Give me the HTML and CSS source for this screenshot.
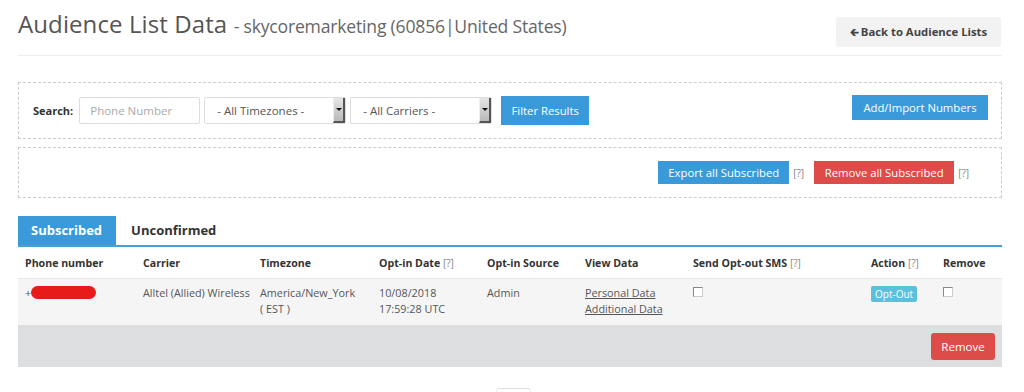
FILE: index.html
```html
<!DOCTYPE html>
<html lang="en">
<head>
    <meta charset="UTF-8">
    <meta name="viewport" content="width=device-width, initial-scale=1.0">
    <title>Audience List Data</title>
    <link rel="stylesheet" href="styles.css">
</head>
<body>
    <div class="page">
        <div class="page-header">
            <h1>Audience List Data <small>- skycoremarketing (60856|United States)</small></h1>
            <a class="btn-back" href="#"><span class="arrow">&#129136;</span>Back to Audience Lists</a>
        </div>

        <div class="box filter-box">
            <div class="filter-left">
                <label for="phone">Search:</label>
                <input type="text" id="phone" class="field" placeholder="Phone Number">
                <div class="fake-select"><span>- All Timezones -</span><i></i></div>
                <div class="fake-select"><span>- All Carriers -</span><i></i></div>
                <button class="btn btn-blue btn-filter">Filter Results</button>
            </div>
            <button class="btn btn-blue btn-add">Add/Import Numbers</button>
        </div>

        <div class="box action-box">
            <button class="btn btn-blue">Export all Subscribed</button>
            <span class="help">[?]</span>
            <button class="btn btn-red">Remove all Subscribed</button>
            <span class="help">[?]</span>
        </div>

        <div class="tabs">
            <a class="tab active" href="#">Subscribed</a>
            <a class="tab" href="#">Unconfirmed</a>
        </div>

        <table class="list">
            <thead>
                <tr>
                    <th class="c1">Phone number</th>
                    <th class="c2">Carrier</th>
                    <th class="c3">Timezone</th>
                    <th class="c4">Opt-in Date <span class="help">[?]</span></th>
                    <th class="c5">Opt-in Source</th>
                    <th class="c6">View Data</th>
                    <th class="c7">Send Opt-out SMS <span class="help">[?]</span></th>
                    <th class="c8">Action <span class="help">[?]</span></th>
                    <th class="c9">Remove</th>
                </tr>
            </thead>
            <tbody>
                <tr>
                    <td>+<span class="redacted"></span></td>
                    <td>Alltel (Allied) Wireless</td>
                    <td>America/New_York<br>( EST )</td>
                    <td>10/08/2018<br>17:59:28 UTC</td>
                    <td>Admin</td>
                    <td><a href="#">Personal Data</a><br><a href="#">Additional Data</a></td>
                    <td><span class="check"></span></td>
                    <td><span class="badge">Opt-Out</span></td>
                    <td><span class="check"></span></td>
                </tr>
            </tbody>
            <tfoot>
                <tr>
                    <td colspan="9"><button class="btn btn-red btn-remove">Remove</button></td>
                </tr>
            </tfoot>
        </table>

        <div class="pager"><span></span></div>
    </div>
</body>
</html>
```

FILE: styles.css
```css
body {
    margin: 0;
    font-family: "Open Sans", Arial, sans-serif;
    color: #555;
    background: #fff;
}
.page {
    padding: 0 22px 0 18px;
}
.page-header {
    display: flex;
    justify-content: space-between;
    align-items: flex-start;
    border-bottom: 1px solid #eee;
    height: 56px;
    box-sizing: border-box;
}
h1 {
    margin: 7px 0 0 0;
    font-size: 24px;
    font-weight: 400;
    color: #555;
    line-height: 34px;
    letter-spacing: 0.1px;
}
h1 small {
    font-size: 17.6px;
    color: #666;
    letter-spacing: -0.2px;
}
.btn-back {
    margin-top: 17px;
    margin-right: 1px;
    background: #f2f2f2;
    color: #444;
    font-size: 11.3px;
    font-weight: 700;
    text-decoration: none;
    width: 165px;
    box-sizing: border-box;
    text-align: center;
    white-space: nowrap;
    height: 30px;
    line-height: 30px;
    border-radius: 2px;
}
.btn-back .arrow {
    font-family: "DejaVu Sans", sans-serif;
    font-size: 11px;
    margin-right: 2px;
}
.box {
    border: 1px dashed #ccc;
    display: flex;
    align-items: center;
}
.filter-box {
    margin-top: 26px;
    height: 57px;
    box-sizing: border-box;
    justify-content: space-between;
    padding: 0 13px 0 14px;
}
.filter-left {
    display: flex;
    align-items: center;
}
.filter-left label {
    font-size: 11px;
    font-weight: 700;
    color: #333;
    margin-right: 6px;
}
.field {
    width: 121px;
    height: 27px;
    box-sizing: border-box;
    border: 1px solid #ddd;
    border-radius: 2px;
    padding: 0 10px;
    font-family: "Open Sans", Arial, sans-serif;
    font-size: 11.5px;
    margin-right: 4px;
}
.field::placeholder {
    color: #aaa;
}
.fake-select {
    width: 142px;
    height: 27px;
    box-sizing: border-box;
    border: 1px solid #ddd;
    border-radius: 2px;
    display: flex;
    align-items: center;
    justify-content: space-between;
    margin-right: 4px;
    font-size: 11.5px;
    color: #555;
    padding-left: 12px;
}
.fake-select i {
    width: 12px;
    height: 25px;
    box-sizing: border-box;
    background: linear-gradient(to bottom, #e6e6e6, #b8b8b8);
    border-right: 2px solid #555;
    border-bottom: 2px solid #555;
    border-left: 1px solid #eee;
    position: relative;
}
.fake-select i::after {
    content: "";
    position: absolute;
    left: 2px;
    top: 10px;
    border-left: 3px solid transparent;
    border-right: 3px solid transparent;
    border-top: 3px solid #111;
}
.btn {
    border: none;
    color: #fff;
    font-family: "Open Sans", Arial, sans-serif;
    font-size: 11.3px;
    padding: 0;
    white-space: nowrap;
    border-radius: 0;
    cursor: pointer;
}
.btn-blue {
    background: #3a9ad9;
}
.btn-red {
    background: #de4c49;
}
.btn-filter {
    height: 29px;
    margin-left: 5px;
    margin-top: -1px;
    width: 88px;
}
.btn-add {
    height: 25px;
    width: 136px;
    align-self: flex-start;
    margin-top: 12px;
}
.action-box {
    margin-top: 8px;
    height: 51px;
    box-sizing: border-box;
    justify-content: flex-end;
    padding-right: 22px;
}
.action-box .btn {
    height: 23px;
}
.action-box .btn-blue {
    width: 131px;
}
.action-box .btn-red {
    width: 140px;
}
.help {
    font-size: 10px;
    color: #888;
    font-weight: 400;
}
.action-box .help {
    margin: 0 10px 0 4px;
}
.tabs {
    display: flex;
    margin-top: 18px;
    border-bottom: 2px solid #4a9fd2;
}
.tab {
    font-size: 13px;
    font-weight: 700;
    color: #333;
    text-decoration: none;
    height: 29px;
    line-height: 29px;
    padding: 0 15px 0 15px;
}
.tab.active {
    background: #3a9ad9;
    color: #fff;
    padding: 0 14px 0 13px;
}
.list {
    width: 100%;
    border-collapse: collapse;
    table-layout: fixed;
    font-size: 10.6px;
}
.list th {
    text-align: left;
    color: #333;
    font-weight: 700;
    height: 31px;
    padding: 0 7px;
    border-bottom: 1px solid #e6e6e6;
    white-space: nowrap;
}
.c1 { width: 104px; }
.c2 { width: 103px; }
.c3 { width: 105px; }
.c4 { width: 94px; }
.c5 { width: 84px; }
.c6 { width: 94px; }
.c7 { width: 164px; }
.c8 { width: 58px; }
.list tbody td {
    background: #f5f5f5;
    vertical-align: top;
    padding: 6px 7px 8px 7px;
    line-height: 16px;
    color: #555;
    font-size: 10.8px;
    white-space: nowrap;
}
.list tbody a {
    color: #555;
}
.redacted {
    display: inline-block;
    width: 65px;
    height: 13px;
    background: #e81b1b;
    border-radius: 7px;
    vertical-align: -2px;
}
.check {
    display: inline-block;
    width: 8px;
    height: 8px;
    border: 1px solid #888;
    border-right-color: #ccc;
    border-bottom-color: #ccc;
    background: #fff;
    margin-top: 2px;
}
.badge {
    display: inline-block;
    background: #5bc0de;
    color: #fff;
    font-size: 10px;
    padding: 0 4px;
    line-height: 16px;
    border-radius: 2px;
    margin-top: 1px;
}
.list tfoot td {
    background: #dcdee0;
    height: 42px;
    text-align: right;
    padding: 0 7px 0 0;
}
.btn-remove {
    height: 27px;
    width: 64px;
    border-radius: 3px;
    font-size: 11.5px;
    margin-top: 1px;
}
.pager {
    display: flex;
    justify-content: center;
    margin-top: 21px;
}
.pager span {
    width: 33px;
    height: 10px;
    border-top: 1px solid #ddd;
    border-left: 1px solid #eee;
    border-right: 1px solid #eee;
    border-radius: 3px 3px 0 0;
    margin-left: 6px;
}
```
